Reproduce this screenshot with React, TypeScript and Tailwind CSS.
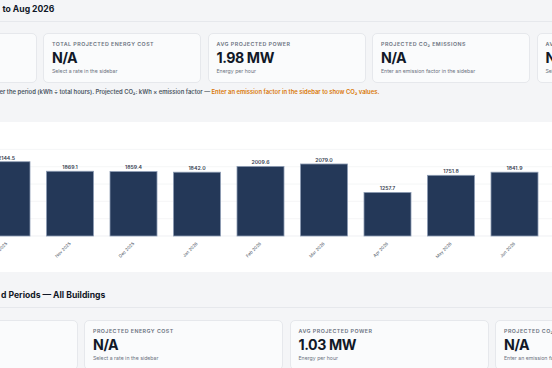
import React from "react";

const FONT = { fontFamily: "Inter, 'Noto Sans', sans-serif" };

type CardProps = { label: string; value: string; sub: string; w: string };

function Card({ label, value, sub, w }: CardProps) {
  return (
    <div
      className={`shrink-0 rounded-[5px] border border-[#e6e8ec] bg-[#fafbfc] pl-[8px] pt-[7.5px] pb-[8.5px] ${w}`}
    >
      <div className="text-[5.3px] leading-[6px] font-semibold tracking-[0.09em] uppercase text-[#6b7280] whitespace-nowrap">
        {label}
      </div>
      <div className="mt-[2px] text-[14.2px] leading-[18px] font-bold tracking-[-0.03em] text-[#111827] whitespace-nowrap">
        {value}
      </div>
      <div className="mt-[0.5px] text-[5.2px] leading-[6px] text-[#6b7280] whitespace-nowrap">
        {sub}
      </div>
    </div>
  );
}

const bars = [
  { m: "Oct 2025", v: 2144.5 },
  { m: "Nov 2025", v: 1869.1 },
  { m: "Dec 2025", v: 1859.4 },
  { m: "Jan 2026", v: 1842.0 },
  { m: "Feb 2026", v: 2009.6 },
  { m: "Mar 2026", v: 2079.0 },
  { m: "Apr 2026", v: 1257.7 },
  { m: "May 2026", v: 1751.8 },
  { m: "Jun 2026", v: 1841.9 },
  { m: "Jul 2026", v: 1900.0 },
];

function Chart() {
  const base = 114;
  const scale = 86.6 / 2500;
  return (
    <svg width={552} height={150} viewBox="0 0 552 150" className="block">
      {[0, 1, 2, 3, 4, 5].map((k) => (
        <line
          key={k}
          x1={0}
          x2={552}
          y1={base - k * 17.32}
          y2={base - k * 17.32}
          stroke={k === 0 ? "#e8eaee" : "#f1f2f4"}
          strokeWidth={0.7}
        />
      ))}
      {bars.map((b, i) => {
        const cx = 6.5 + i * 63.5;
        const h = b.v * scale;
        const top = base - h;
        return (
          <g key={b.m}>
            <rect
              x={cx - 23.5}
              y={top}
              width={47}
              height={h}
              fill="#243858"
              stroke="#8d9cb3"
              strokeWidth={0.8}
            />
            <text
              x={cx}
              y={top - 2.2}
              textAnchor="middle"
              fontSize={5.2}
              fontWeight={600}
              fill="#374151"
              style={FONT}
            >
              {b.v.toFixed(1)}
            </text>
            <text
              x={cx + 1}
              y={122}
              textAnchor="end"
              fontSize={4.3}
              fill="#4b5563"
              transform={`rotate(-45 ${cx + 1} 122)`}
              style={FONT}
            >
              {b.m}
            </text>
          </g>
        );
      })}
    </svg>
  );
}

export default function App() {
  return (
    <div
      className="w-[552px] h-[368px] overflow-hidden bg-[#f4f5f7]"
      style={FONT}
    >
      {/* Section 1 */}
      <div className="border-b border-[#e6e8ec] pl-[2.5px] pt-[3.5px] pb-[6px] text-[8.6px] leading-[11px] font-bold text-[#111827] whitespace-nowrap">
        to Aug 2026
      </div>
      <div className="mt-[11px] flex gap-[6.5px] ml-[-121.5px]">
        <Card w="w-[158px]" label="Projected Energy" value="67,412 kWh" sub="Sum of forecasts" />
        <Card w="w-[158px]" label="Total Projected Energy Cost" value="N/A" sub="Select a rate in the sidebar" />
        <Card w="w-[158px]" label="Avg Projected Power" value="1.98 MW" sub="Energy per hour" />
        <Card w="w-[158px]" label="Projected CO₂ Emissions" value="N/A" sub="Enter an emission factor in the sidebar" />
        <Card w="w-[158px]" label="Avg Cost per kWh" value="N/A" sub="Select a rate in the sidebar" />
      </div>
      <div className="mt-[5px] text-[5.9px] leading-[7px] font-semibold text-[#4b5563] whitespace-nowrap ml-[-0.5px]">
        er the period (kWh ÷ total hours). Projected CO₂: kWh × emission factor —{" "}
        <span className="text-[#d97706]">
          Enter an emission factor in the sidebar to show CO₂ values.
        </span>
      </div>
      <div className="mt-[26.8px] bg-white">
        <Chart />
      </div>

      {/* Section 2 */}
      <div className="border-b border-[#e6e8ec] pl-[1px] pt-[18.6px] pb-[5.4px] text-[8.6px] leading-[11px] font-bold text-[#111827] whitespace-nowrap">
        d Periods — All Buildings
      </div>
      <div className="mt-[12px] flex gap-[6.5px] ml-[-121.5px]">
        <Card w="w-[199px]" label="Projected Energy" value="92,204 kWh" sub="Sum of forecasts" />
        <Card w="w-[199px]" label="Projected Energy Cost" value="N/A" sub="Select a rate in the sidebar" />
        <Card w="w-[199px]" label="Avg Projected Power" value="1.03 MW" sub="Energy per hour" />
        <Card w="w-[199px]" label="Projected CO₂ Emissions" value="N/A" sub="Enter an emission factor in the sidebar" />
      </div>
    </div>
  );
}
